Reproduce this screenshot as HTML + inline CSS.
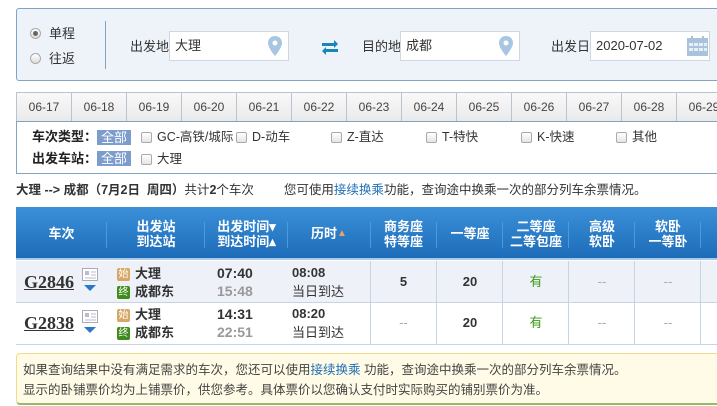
<!DOCTYPE html>
<html><head><meta charset="utf-8">
<style>
*{margin:0;padding:0;box-sizing:border-box}
body{width:717px;height:406px;overflow:hidden;background:#fff;font-family:"Liberation Sans","Noto Sans CJK SC",sans-serif;font-size:12px;line-height:16px;color:#333;position:relative}
.abs{position:absolute}
.panel{left:16px;top:8px;width:720px;height:73px;background:#eef3fa;border:1px solid #7fa4c4;border-radius:3px}
.inp{background:#fff;border:1px solid #cfd8e2;height:30px;top:31px;font-size:13px;line-height:28px;padding-left:5px;color:#333}
.lbl{font-size:13px;top:39px;color:#333}
.radio{width:11px;height:11px;border-radius:50%;border:1px solid #aaa;background:linear-gradient(#fff,#ddd)}
.tab{top:92px;height:30px;width:55px;border:1px solid #b9c4cf;border-bottom:none;border-right:none;background:linear-gradient(#f9f9f9,#e9e9e9);text-align:center;line-height:29px;font-size:12px;color:#444}
.filter{left:16px;top:121px;width:720px;height:53px;border:1px solid #7fa4c4}
.fl{font-weight:bold;font-size:13px;color:#222}
.all{background:#7c9ccb;color:#fff;font-size:13px;padding:0 4px;line-height:15px;height:15px}
.cb{width:11px;height:11px;border:1px solid #aaa;border-radius:2px;background:linear-gradient(#fff,#e5e5e5)}
.ct{font-size:12.5px;color:#333}
.th{top:207px;left:16px;width:710px;height:53px;background:linear-gradient(#3b90d8,#1d6cb9);border-bottom:2px solid #a9cbe8}
.hc{top:207px;height:53px;color:#fff;font-weight:bold;font-size:13px;text-align:center;display:flex;align-items:center;justify-content:center;line-height:15px}
.sep{top:222px;width:1px;height:26px;background:#17599a;border-right:1px solid #4a9ade}
.row{left:16px;width:710px;height:42px;border-bottom:1px solid #c6d5e4}
.vl{width:1px;background:#c6d5e4}
.num{font-family:"Liberation Serif",serif;font-weight:bold;font-size:18px;line-height:20px;text-decoration:underline;color:#333}
.st{font-weight:bold;font-size:13px;color:#333}
.bd{width:13px;height:13px;font-size:10px;color:#fff;text-align:center;line-height:13px;border-radius:2px}
.tm{font-weight:bold;font-size:14px}
.cell{text-align:center;font-size:13px}
</style></head><body>
<div class="abs panel"></div>
<div class="abs radio" style="left:30px;top:28px"><div style="width:5px;height:5px;background:#666;border-radius:50%;margin:2px"></div></div>
<div class="abs" style="left:49px;top:26px;font-size:13px">单程</div>
<div class="abs radio" style="left:30px;top:53px"></div>
<div class="abs" style="left:49px;top:51px;font-size:13px">往返</div>
<div class="abs" style="left:105px;top:21px;width:1px;height:48px;background:#7fa4c4"></div>
<div class="abs lbl" style="left:130px">出发地</div>
<div class="abs inp" style="left:169px;width:120px">大理</div>
<svg class="abs" style="left:268px;top:36px" width="14" height="20" viewBox="0 0 14 20"><path d="M7 0C3 0 0 3 0 7c0 5 7 13 7 13s7-8 7-13C14 3 11 0 7 0z" fill="#a8c6e2"/><circle cx="7" cy="7" r="2.5" fill="#fff"/></svg>
<svg class="abs" style="left:321px;top:40px" width="18" height="15" viewBox="0 0 18 15"><path d="M1 6V3h12V0l4 4-4 4V6z M17 9v3H5v3l-4-4 4-4v2z" fill="#1a86b8"/></svg>
<div class="abs lbl" style="left:362px">目的地</div>
<div class="abs inp" style="left:400px;width:120px">成都</div>
<svg class="abs" style="left:499px;top:36px" width="14" height="20" viewBox="0 0 14 20"><path d="M7 0C3 0 0 3 0 7c0 5 7 13 7 13s7-8 7-13C14 3 11 0 7 0z" fill="#a8c6e2"/><circle cx="7" cy="7" r="2.5" fill="#fff"/></svg>
<div class="abs lbl" style="left:551px">出发日</div>
<div class="abs inp" style="left:590px;width:120px">2020-07-02</div>
<svg class="abs" style="left:687px;top:36px" width="21" height="20" viewBox="0 0 21 20"><rect x="0" y="2" width="21" height="18" fill="#a9c3dc"/><rect x="4" y="0" width="2" height="4" fill="#a9c3dc"/><rect x="15" y="0" width="2" height="4" fill="#a9c3dc"/><g fill="#e6eef6"><rect x="2" y="7" width="4" height="3"/><rect x="7" y="7" width="4" height="3"/><rect x="12" y="7" width="4" height="3"/><rect x="2" y="12" width="4" height="3"/><rect x="7" y="12" width="4" height="3"/><rect x="12" y="12" width="4" height="3"/><rect x="17" y="7" width="3" height="3"/><rect x="17" y="12" width="3" height="3"/></g></svg>

<div class="abs tab" style="left:16px">06-17</div>
<div class="abs tab" style="left:71px">06-18</div>
<div class="abs tab" style="left:126px">06-19</div>
<div class="abs tab" style="left:181px">06-20</div>
<div class="abs tab" style="left:236px">06-21</div>
<div class="abs tab" style="left:291px">06-22</div>
<div class="abs tab" style="left:346px">06-23</div>
<div class="abs tab" style="left:401px">06-24</div>
<div class="abs tab" style="left:456px">06-25</div>
<div class="abs tab" style="left:511px">06-26</div>
<div class="abs tab" style="left:566px">06-27</div>
<div class="abs tab" style="left:621px">06-28</div>
<div class="abs tab" style="left:676px">06-29</div>

<div class="abs filter"></div>
<div class="abs fl" style="left:32px;top:129px">车次类型：</div>
<div class="abs all" style="left:97px;top:130px">全部</div>
<div class="abs cb" style="left:141px;top:132px"></div><div class="abs ct" style="left:157px;top:129px">GC-高铁/城际</div>
<div class="abs cb" style="left:236px;top:132px"></div><div class="abs ct" style="left:252px;top:129px">D-动车</div>
<div class="abs cb" style="left:331px;top:132px"></div><div class="abs ct" style="left:347px;top:129px">Z-直达</div>
<div class="abs cb" style="left:426px;top:132px"></div><div class="abs ct" style="left:442px;top:129px">T-特快</div>
<div class="abs cb" style="left:521px;top:132px"></div><div class="abs ct" style="left:537px;top:129px">K-快速</div>
<div class="abs cb" style="left:616px;top:132px"></div><div class="abs ct" style="left:632px;top:129px">其他</div>
<div class="abs fl" style="left:32px;top:151px">出发车站：</div>
<div class="abs all" style="left:97px;top:151px">全部</div>
<div class="abs cb" style="left:141px;top:154px"></div><div class="abs ct" style="left:157px;top:151px">大理</div>

<div class="abs" style="left:16px;top:182px;font-size:12.5px;white-space:nowrap"><b>大理 --&gt; 成都（7月2日&nbsp; 周四）</b>共计<b>2</b>个车次<span style="margin-left:30px">您可使用<span style="color:#1f6fb5">接续换乘</span>功能，查询途中换乘一次的部分列车余票情况。</span></div>

<div class="abs th"></div>
<div class="abs hc" style="left:16px;width:91px">车次</div>
<div class="abs hc" style="left:107px;width:98px">出发站<br>到达站</div>
<div class="abs hc" style="left:205px;width:83px">出发时间▾<br>到达时间▴</div>
<div class="abs hc" style="left:288px;width:82px">历时 <span style="color:#f0a060;font-size:10px">▲</span></div>
<div class="abs hc" style="left:370px;width:67px">商务座<br>特等座</div>
<div class="abs hc" style="left:437px;width:66px">一等座</div>
<div class="abs hc" style="left:503px;width:66px">二等座<br>二等包座</div>
<div class="abs hc" style="left:569px;width:66px">高级<br>软卧</div>
<div class="abs hc" style="left:635px;width:66px">软卧<br>一等卧</div>
<div class="abs sep" style="left:106px"></div><div class="abs sep" style="left:204px"></div><div class="abs sep" style="left:287px"></div><div class="abs sep" style="left:370px"></div><div class="abs sep" style="left:436px"></div><div class="abs sep" style="left:502px"></div><div class="abs sep" style="left:568px"></div><div class="abs sep" style="left:634px"></div><div class="abs sep" style="left:700px"></div>

<div class="abs row" style="top:261px;background:#eef1f8"></div>
<div class="abs row" style="top:303px;background:#fff"></div>
<div class="abs vl" style="left:370px;top:261px;height:84px"></div><div class="abs vl" style="left:436px;top:261px;height:84px"></div><div class="abs vl" style="left:502px;top:261px;height:84px"></div><div class="abs vl" style="left:568px;top:261px;height:84px"></div><div class="abs vl" style="left:634px;top:261px;height:84px"></div><div class="abs vl" style="left:700px;top:261px;height:84px"></div>

<div class="abs num" style="left:24px;top:272px">G2846</div>
<svg class="abs" style="left:82px;top:268px" width="16" height="13"><rect x=".5" y=".5" width="15" height="12" fill="#fff" stroke="#aab"/><rect x="3" y="3" width="4" height="4" fill="#bbc"/><path d="M9 4h5M9 7h5M3 10h11" stroke="#bbc"/></svg>
<div class="abs" style="left:84px;top:285px;width:0;height:0;border-left:6px solid transparent;border-right:6px solid transparent;border-top:6px solid #2a78c6"></div>
<div class="abs bd" style="left:117px;top:268px;background:#d8a766">始</div><div class="abs st" style="left:135px;top:266px">大理</div>
<div class="abs bd" style="left:117px;top:286px;background:#3f8b1c">终</div><div class="abs st" style="left:135px;top:284px">成都东</div>
<div class="abs tm" style="left:217px;top:265px">07:40</div>
<div class="abs tm" style="left:217px;top:283px;color:#999">15:48</div>
<div class="abs tm" style="left:292px;top:265px;font-size:13px">08:08</div>
<div class="abs" style="left:292px;top:284px;font-size:13px">当日到达</div>
<div class="abs cell" style="left:370px;width:67px;top:274px;font-weight:bold">5</div>
<div class="abs cell" style="left:437px;width:66px;top:274px;font-weight:bold">20</div>
<div class="abs cell" style="left:503px;width:66px;top:274px;color:#3a9a1a">有</div>
<div class="abs cell" style="left:569px;width:66px;top:274px;color:#aaa">--</div>
<div class="abs cell" style="left:635px;width:66px;top:274px;color:#aaa">--</div>

<div class="abs num" style="left:24px;top:313px">G2838</div>
<svg class="abs" style="left:82px;top:310px" width="16" height="13"><rect x=".5" y=".5" width="15" height="12" fill="#fff" stroke="#aab"/><rect x="3" y="3" width="4" height="4" fill="#bbc"/><path d="M9 4h5M9 7h5M3 10h11" stroke="#bbc"/></svg>
<div class="abs" style="left:84px;top:327px;width:0;height:0;border-left:6px solid transparent;border-right:6px solid transparent;border-top:6px solid #2a78c6"></div>
<div class="abs bd" style="left:117px;top:309px;background:#d8a766">始</div><div class="abs st" style="left:135px;top:307px">大理</div>
<div class="abs bd" style="left:117px;top:327px;background:#3f8b1c">终</div><div class="abs st" style="left:135px;top:325px">成都东</div>
<div class="abs tm" style="left:217px;top:306px">14:31</div>
<div class="abs tm" style="left:217px;top:324px;color:#999">22:51</div>
<div class="abs tm" style="left:292px;top:306px;font-size:13px">08:20</div>
<div class="abs" style="left:292px;top:325px;font-size:13px">当日到达</div>
<div class="abs cell" style="left:370px;width:67px;top:315px;color:#aaa">--</div>
<div class="abs cell" style="left:437px;width:66px;top:315px;font-weight:bold">20</div>
<div class="abs cell" style="left:503px;width:66px;top:315px;color:#3a9a1a">有</div>
<div class="abs cell" style="left:569px;width:66px;top:315px;color:#aaa">--</div>
<div class="abs cell" style="left:635px;width:66px;top:315px;color:#aaa">--</div>

<div class="abs" style="left:16px;top:353px;width:720px;height:52px;background:#fffbe6;border:1px solid #f0dc8a;border-bottom:2px solid #9bb86a;border-radius:4px"></div>
<div class="abs" style="left:23px;top:362px;font-size:12.5px;color:#444;white-space:nowrap">如果查询结果中没有满足需求的车次，您还可以使用<span style="color:#1f6fb5">接续换乘</span> 功能，查询途中换乘一次的部分列车余票情况。</div>
<div class="abs" style="left:23px;top:382px;font-size:12.5px;color:#444;white-space:nowrap">显示的卧铺票价均为上铺票价，供您参考。具体票价以您确认支付时实际购买的铺别票价为准。</div>
</body></html>
